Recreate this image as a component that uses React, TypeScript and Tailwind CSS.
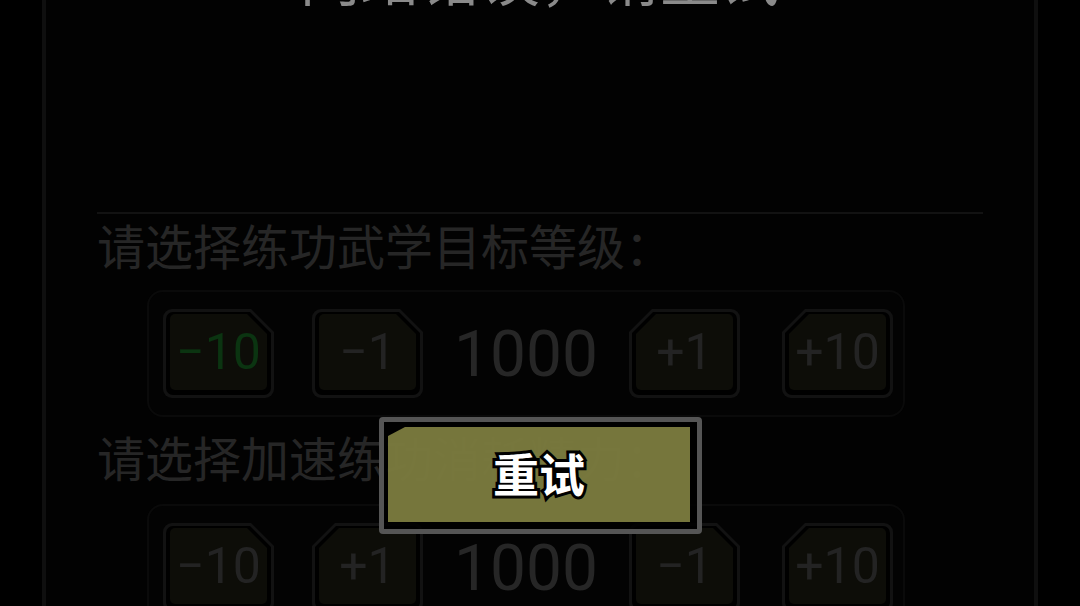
import React from "react";

type Btn = { label: string; green?: boolean };

const FONT = "[font-family:Roboto,'Noto_Sans_CJK_SC',sans-serif]";

function StepBtn({ label, green }: Btn) {
  const minus = label.startsWith("−");
  const outerClip = minus
    ? "[clip-path:polygon(0_0,calc(100%-23px)_0,100%_23px,100%_100%,0_100%)]"
    : "[clip-path:polygon(23px_0,100%_0,100%_100%,0_100%,0_23px)]";
  const midClip = minus
    ? "[clip-path:polygon(0_0,calc(100%-21px)_0,100%_21px,100%_100%,0_100%)]"
    : "[clip-path:polygon(21px_0,100%_0,100%_100%,0_100%,0_21px)]";
  const innerClip = minus
    ? "[clip-path:polygon(0_0,calc(100%-20px)_0,100%_20px,100%_100%,0_100%)]"
    : "[clip-path:polygon(20px_0,100%_0,100%_100%,0_100%,0_20px)]";
  return (
    <div className={`w-[111px] h-[89px] shrink-0 rounded-[9px] bg-[#121212] p-[3px] ${outerClip}`}>
      <div className={`w-full h-full rounded-[7px] bg-black pt-[2px] px-[4px] pb-[5px] ${midClip}`}>
        <div
          className={`w-full h-full rounded-[5px] bg-[#0d0d08] flex items-center justify-center ${innerClip}`}
        >
          <span
            className={`${FONT} text-[50px] leading-none ${green ? "text-[#0b3411]" : "text-[#232323]"}`}
          >
            {label}
          </span>
        </div>
      </div>
    </div>
  );
}

function Stepper({ btns, value }: { btns: Btn[]; value: string }) {
  return (
    <div className="ml-[50px] w-[758px] rounded-2xl border-2 border-[#0a0a0a] bg-[#030303] py-[17px] pl-[14px] flex items-center">
      <StepBtn {...btns[0]} />
      <div className="ml-[38px]">
        <StepBtn {...btns[1]} />
      </div>
      <div className={`w-[206px] text-center ${FONT} text-[64px] leading-none text-[#262626] mt-[3px]`}>
        {value}
      </div>
      <StepBtn {...btns[2]} />
      <div className="ml-[42px]">
        <StepBtn {...btns[3]} />
      </div>
    </div>
  );
}

export default function App() {
  return (
    <div className="relative w-[1080px] h-[606px] overflow-hidden bg-black">
      <div className="mx-[42px] h-full flex flex-col border-x-4 border-[#0f0f0f] bg-[#020202] px-[51px]">
        <div
          className={`mt-[-49px] h-[60px] shrink-0 text-center text-[60px] leading-[60px] text-[#8a8a8a] ${FONT}`}
        >
          网络错误，请重试
        </div>
        <div className="mt-[201px] h-[2px] shrink-0 bg-[#121212]" />
        <div className={`mt-[11px] text-[48px] leading-[48px] text-[#262626] ${FONT}`}>
          请选择练功武学目标等级：
        </div>
        <div className="mt-[17px] shrink-0">
          <Stepper
            value="1000"
            btns={[{ label: "−10", green: true }, { label: "−1" }, { label: "+1" }, { label: "+10" }]}
          />
        </div>
        <div className={`mt-[20px] text-[48px] leading-[48px] text-[#262626] ${FONT}`}>
          请选择加速练功消耗精力：
        </div>
        <div className="mt-[19px] shrink-0">
          <Stepper
            value="1000"
            btns={[{ label: "−10" }, { label: "+1" }, { label: "−1" }, { label: "+10" }]}
          />
        </div>
      </div>

      <div className="absolute left-[379px] top-[417px] w-[323px] h-[117px] rounded-[4px] border-[5px] border-[#555555] bg-black/85 pt-[5px] pl-[4px] pr-[7px] pb-[7px]">
        <div className="w-full h-full bg-[#93934b]/80 [clip-path:polygon(17px_0,100%_0,100%_100%,0_100%,0_9px)] flex items-center justify-center">
          <span
            className={`${FONT} font-bold text-[46px] leading-none text-white [-webkit-text-stroke:6px_black] [paint-order:stroke_fill] mt-[2px]`}
          >
            重试
          </span>
        </div>
      </div>
    </div>
  );
}
